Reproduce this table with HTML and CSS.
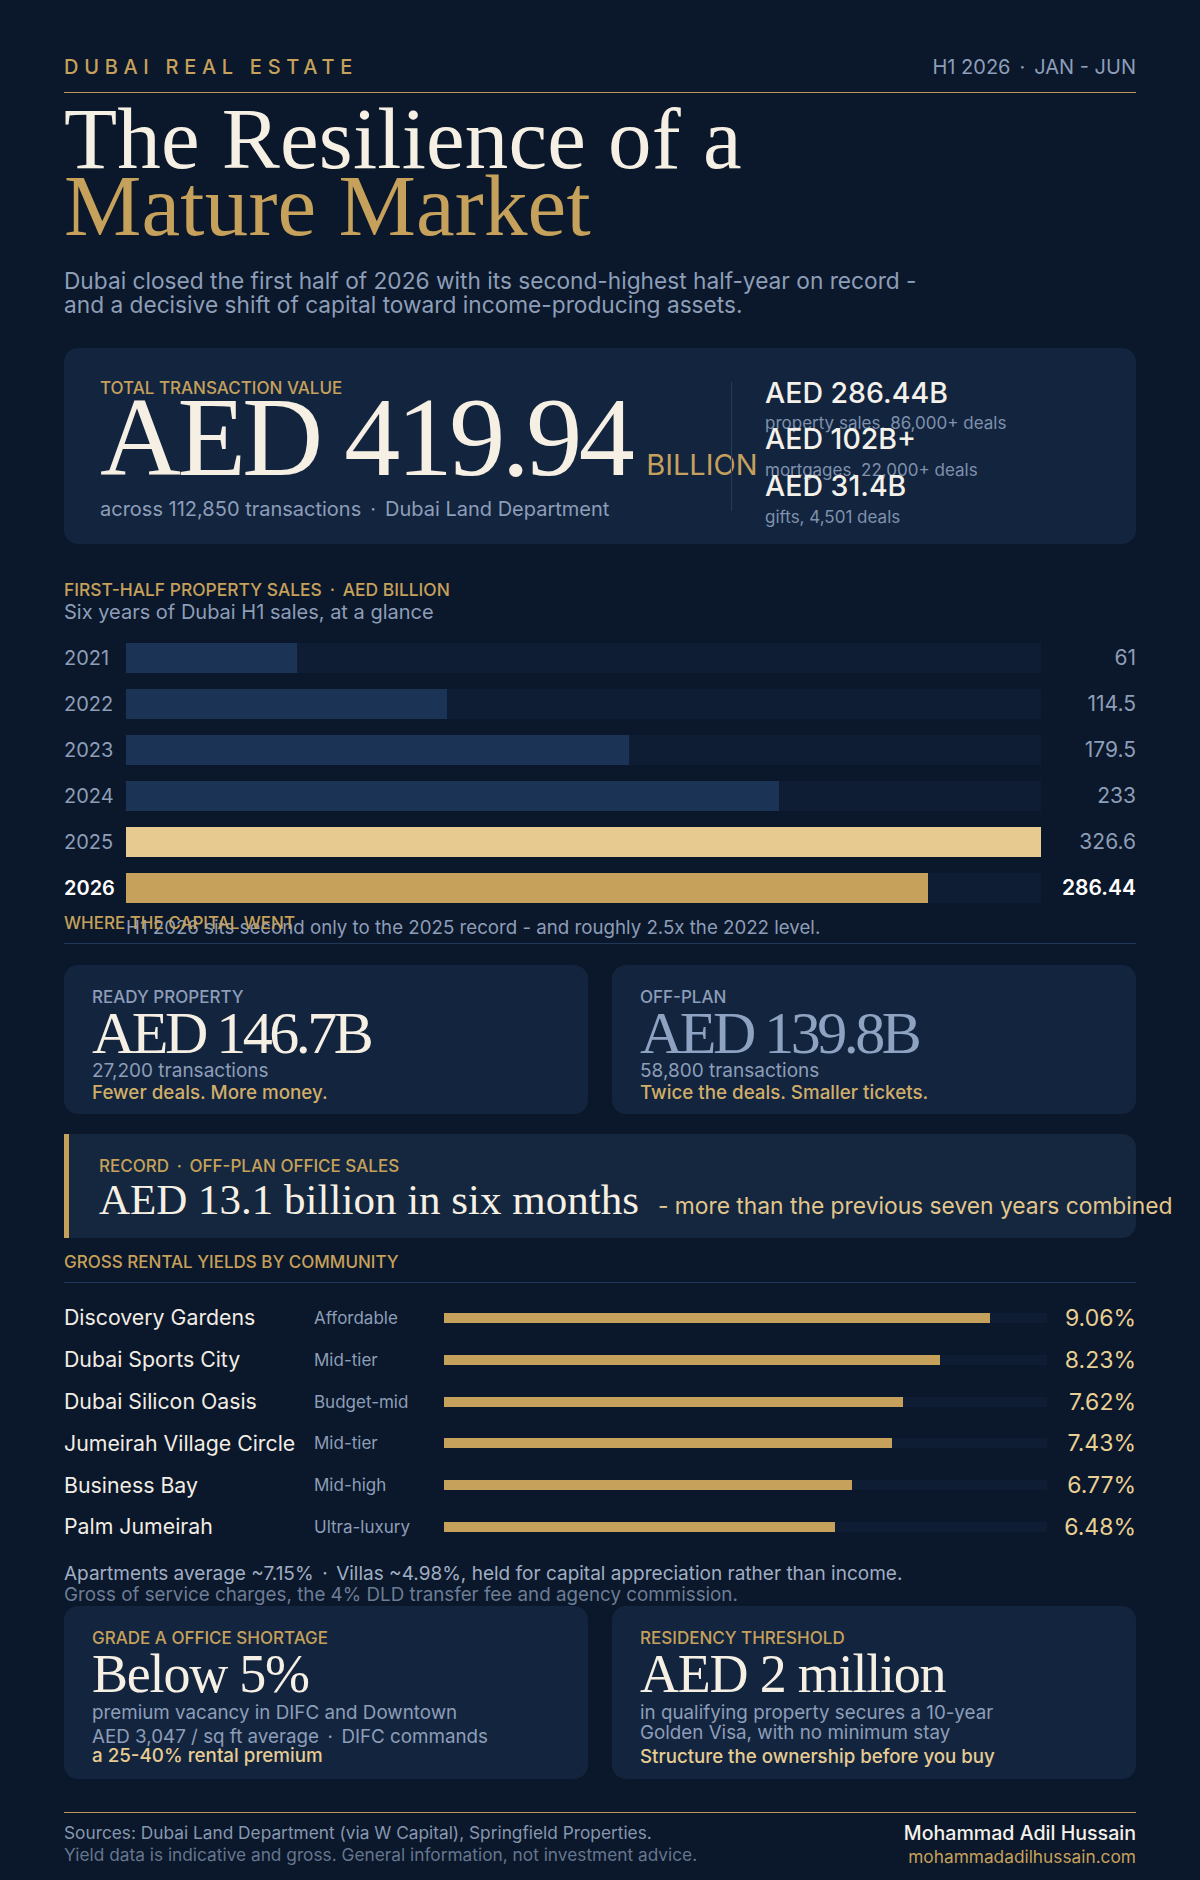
FILE: index.html
```html
<!DOCTYPE html>
<html lang="en">
<head>
<meta charset="utf-8">
<title>Dubai Real Estate H1 2026</title>
<link rel="stylesheet" href="styles.css">
</head>
<body>
<main class="page">
  <header class="top">
    <div class="kicker">DUBAI REAL ESTATE</div>
    <div class="period">H1 2026<span class="sep">·</span>JAN - JUN</div>
  </header>

  <h1 class="title">The Resilience of a<br><span class="gold">Mature Market</span></h1>
  <p class="lede">Dubai closed the first half of 2026 with its second-highest half-year on record -<br>and a decisive shift of capital toward income-producing assets.</p>

  <section class="card total">
    <div class="total-main">
      <div class="label">TOTAL TRANSACTION VALUE</div>
      <div class="figure"><span class="big">AED 419.94</span><span class="unit">BILLION</span></div>
      <div class="total-foot">across 112,850 transactions<span class="sep">·</span>Dubai Land Department</div>
    </div>
    <div class="vrule"></div>
    <div class="stats">
      <div class="stat"><div class="stat-v">AED 286.44B</div><div class="stat-l">property sales, 86,000+ deals</div></div>
      <div class="stat"><div class="stat-v">AED 102B+</div><div class="stat-l">mortgages, 22,000+ deals</div></div>
      <div class="stat"><div class="stat-v">AED 31.4B</div><div class="stat-l">gifts, 4,501 deals</div></div>
    </div>
  </section>

  <section class="sales">
    <div class="label chart-title">FIRST-HALF PROPERTY SALES<span class="sep">·</span>AED BILLION</div>
    <div class="sub">Six years of Dubai H1 sales, at a glance</div>
    <div class="bars">
      <div class="bar-row"><span class="yr">2021</span><div class="track"><div class="fill" style="width:18.68%"></div></div><span class="val">61</span></div>
      <div class="bar-row"><span class="yr">2022</span><div class="track"><div class="fill" style="width:35.06%"></div></div><span class="val">114.5</span></div>
      <div class="bar-row"><span class="yr">2023</span><div class="track"><div class="fill" style="width:54.96%"></div></div><span class="val">179.5</span></div>
      <div class="bar-row"><span class="yr">2024</span><div class="track"><div class="fill" style="width:71.34%"></div></div><span class="val">233</span></div>
      <div class="bar-row record-year"><span class="yr">2025</span><div class="track"><div class="fill" style="width:100%"></div></div><span class="val">326.6</span></div>
      <div class="bar-row current"><span class="yr">2026</span><div class="track"><div class="fill" style="width:87.70%"></div></div><span class="val">286.44</span></div>
    </div>
    <p class="chart-note">H1 2026 sits second only to the 2025 record - and roughly 2.5x the 2022 level.</p>
  </section>

  <div class="label section-head">WHERE THE CAPITAL WENT</div>

  <section class="split">
    <div class="card tile">
      <div class="tile-label">READY PROPERTY</div>
      <div class="tile-value">AED 146.7B</div>
      <div class="tile-sub">27,200 transactions</div>
      <div class="tile-em">Fewer deals. More money.</div>
    </div>
    <div class="card tile">
      <div class="tile-label">OFF-PLAN</div>
      <div class="tile-value dim">AED 139.8B</div>
      <div class="tile-sub">58,800 transactions</div>
      <div class="tile-em">Twice the deals. Smaller tickets.</div>
    </div>
  </section>

  <section class="record">
    <div class="label">RECORD<span class="sep">·</span>OFF-PLAN OFFICE SALES</div>
    <div class="record-line"><span class="record-big">AED 13.1 billion in six months</span><span class="record-tail">- more than the previous seven years combined</span></div>
  </section>

  <section class="yields">
    <div class="label yields-head">GROSS RENTAL YIELDS BY COMMUNITY</div>
    <div class="yrows">
      <div class="yrow"><span class="yname">Discovery Gardens</span><span class="ytier">Affordable</span><div class="ytrack"><div class="yfill" style="width:90.6%"></div></div><span class="yval">9.06%</span></div>
      <div class="yrow"><span class="yname">Dubai Sports City</span><span class="ytier">Mid-tier</span><div class="ytrack"><div class="yfill" style="width:82.3%"></div></div><span class="yval">8.23%</span></div>
      <div class="yrow"><span class="yname">Dubai Silicon Oasis</span><span class="ytier">Budget-mid</span><div class="ytrack"><div class="yfill" style="width:76.2%"></div></div><span class="yval">7.62%</span></div>
      <div class="yrow"><span class="yname">Jumeirah Village Circle</span><span class="ytier">Mid-tier</span><div class="ytrack"><div class="yfill" style="width:74.3%"></div></div><span class="yval">7.43%</span></div>
      <div class="yrow"><span class="yname">Business Bay</span><span class="ytier">Mid-high</span><div class="ytrack"><div class="yfill" style="width:67.7%"></div></div><span class="yval">6.77%</span></div>
      <div class="yrow"><span class="yname">Palm Jumeirah</span><span class="ytier">Ultra-luxury</span><div class="ytrack"><div class="yfill" style="width:64.8%"></div></div><span class="yval">6.48%</span></div>
    </div>
    <p class="ynote">Apartments average ~7.15%<span class="sep">·</span>Villas ~4.98%, held for capital appreciation rather than income.</p>
    <p class="ynote dim">Gross of service charges, the 4% DLD transfer fee and agency commission.</p>
  </section>

  <section class="duo">
    <div class="card tile tall">
      <div class="label">GRADE A OFFICE SHORTAGE</div>
      <div class="duo-value">Below 5%</div>
      <p class="duo-p">premium vacancy in DIFC and Downtown</p>
      <p class="duo-p second">AED 3,047 / sq ft average<span class="sep">·</span>DIFC commands<br><strong>a 25-40% rental premium</strong></p>
    </div>
    <div class="card tile tall">
      <div class="label">RESIDENCY THRESHOLD</div>
      <div class="duo-value">AED 2 million</div>
      <p class="duo-p">in qualifying property secures a 10-year<br>Golden Visa, with no minimum stay</p>
      <p class="duo-cta">Structure the ownership before you buy</p>
    </div>
  </section>

  <footer class="foot">
    <div class="foot-src">
      <div>Sources: Dubai Land Department (via W Capital), Springfield Properties.</div>
      <div class="dim">Yield data is indicative and gross. General information, not investment advice.</div>
    </div>
    <div class="foot-by">
      <div class="foot-name">Mohammad Adil Hussain</div>
      <div class="foot-url">mohammadadilhussain.com</div>
    </div>
  </footer>
</main>
</body>
</html>
```

FILE: styles.css
```css
* { box-sizing: border-box; }
html, body { margin: 0; padding: 0; }
body {
  background: #0b172a;
  font-family: Inter, "Noto Sans", sans-serif;
  color: #8d9eb8;
}
p { margin: 0; }
.page {
  width: 1200px;
  min-height: 1880px;
  padding: 54.5px 64px 0;
}
.sep { margin: 0 0.45em; }

/* header */
.top {
  display: flex;
  justify-content: space-between;
  align-items: baseline;
  padding-bottom: 13.5px;
  border-bottom: 1.5px solid #b9975a;
}
.kicker {
  font-size: 20px;
  line-height: 24px;
  letter-spacing: 5.7px;
  font-weight: 500;
  color: #c6a15b;
}
.period {
  font-size: 20px;
  line-height: 24px;
  color: #8d9eb8;
}
.title {
  margin: 11.5px 0 0;
  font-family: "Liberation Serif", serif;
  font-weight: 400;
  font-size: 87px;
  line-height: 67px;
  letter-spacing: 0.2px;
  color: #f6f0e4;
}
.title .gold { color: #c6a15b; }
.lede {
  margin-top: 30px;
  font-size: 22.7px;
  line-height: 24px;
  color: #8d9eb8;
}

/* generic */
.card {
  background: #13243f;
  border-radius: 14px;
}
.label {
  font-size: 17px;
  line-height: 20px;
  font-weight: 500;
  color: #c6a15b;
}

/* total card */
.total {
  margin-top: 31px;
  height: 196px;
  display: flex;
  align-items: flex-start;
  padding: 30px 36px 0;
}
.total-main {
  flex: none;
  width: 599px;
}
.figure {
  display: flex;
  align-items: baseline;
  white-space: nowrap;
}
.big {
  font-family: "Liberation Serif", serif;
  font-size: 112px;
  line-height: 78px;
  letter-spacing: -3.5px;
  color: #f6f0e4;
}
.unit {
  margin-left: 15px;
  font-size: 29px;
  line-height: 29px;
  color: #c6a15b;
}
.total-foot {
  margin-top: 18px;
  font-size: 20px;
  line-height: 24px;
  color: #8d9eb8;
}
.vrule {
  flex: none;
  width: 1px;
  height: 129px;
  margin: 4px 0 0 32px;
  background: #263b5b;
}
.stats {
  flex: 1;
  margin-top: 2px;
  padding-left: 33px;
  white-space: nowrap;
}
.stat { margin-bottom: -5.8px; }
.stat-v {
  font-size: 28.5px;
  line-height: 26px;
  font-weight: 500;
  color: #f4f1ea;
}
.stat-l {
  margin-top: 9.6px;
  font-size: 17px;
  line-height: 17px;
  color: #7f91ac;
}

/* sales chart */
.sales { margin-top: 36px; }
.chart-title { font-size: 17.4px; }
.sub {
  font-size: 20px;
  line-height: 24px;
  color: #8d9eb8;
}
.bars {
  margin-top: 19px;
  display: flex;
  flex-direction: column;
  gap: 16px;
}
.bar-row {
  display: grid;
  grid-template-columns: 62px 915px 1fr;
  height: 30px;
  align-items: center;
}
.yr {
  font-size: 20px;
  color: #8d9eb8;
}
.val {
  text-align: right;
  font-size: 21px;
  color: #8d9eb8;
}
.track {
  height: 30px;
  background: #0f1d34;
}
.fill {
  height: 100%;
  background: #1b3354;
}
.record-year .fill { background: #e6ca8f; }
.current .fill { background: #c6a15b; }
.current .yr, .current .val {
  color: #ffffff;
  font-weight: 600;
}
.chart-note {
  margin: 13.6px 0 0 62px;
  font-size: 18.7px;
  line-height: 23px;
  color: #8d9eb8;
}
.section-head {
  margin-top: -26px;
  padding-bottom: 10px;
  border-bottom: 1px solid #22385a;
}

/* ready / off-plan */
.split {
  display: grid;
  grid-template-columns: 1fr 1fr;
  gap: 24px;
  margin-top: 21px;
}
.tile {
  height: 149px;
  padding: 21.5px 28px 0;
}
.tile-label {
  font-size: 17px;
  line-height: 20px;
  font-weight: 500;
  color: #8d9eb8;
}
.tile-value {
  font-family: "Liberation Serif", serif;
  font-size: 60px;
  line-height: 52.4px;
  letter-spacing: -3.5px;
  color: #f6f0e4;
  white-space: nowrap;
}
.tile-value.dim { color: #8ea3c2; }
.tile-sub {
  margin-top: 1.2px;
  font-size: 19px;
  line-height: 22px;
  color: #8d9eb8;
}
.tile-em {
  font-size: 18.8px;
  line-height: 22px;
  font-weight: 500;
  color: #d1ae68;
}

/* record */
.record {
  margin-top: 20px;
  height: 104px;
  background: #14273f;
  border-left: 5px solid #c6a15b;
  border-radius: 0 14px 14px 0;
  padding: 22px 30px 0;
}
.record-line {
  display: flex;
  align-items: baseline;
  white-space: nowrap;
  margin-top: 0.8px;
}
.record-big {
  font-family: "Liberation Serif", serif;
  font-size: 43px;
  line-height: 46px;
  color: #f6f0e4;
}
.record-tail {
  margin-left: 19px;
  font-size: 22.8px;
  line-height: 26px;
  color: #e2c68c;
}

/* yields */
.yields { margin-top: 14px; }
.yields-head {
  padding-bottom: 10px;
  border-bottom: 1px solid #22385a;
}
.yrows { margin-top: 14px; }
.yrow {
  display: grid;
  grid-template-columns: 250px 130px 603px 1fr;
  height: 41.8px;
  align-items: center;
}
.yname {
  font-size: 21.3px;
  line-height: 25px;
  color: #f1ede4;
}
.ytier {
  font-size: 17px;
  color: #8d9eb8;
}
.ytrack {
  height: 10px;
  background: #0f1d34;
}
.yfill {
  height: 100%;
  background: #c6a15b;
}
.yval {
  text-align: right;
  font-size: 23px;
  line-height: 28px;
  color: #e8cf94;
}
.ynote {
  font-size: 19px;
  line-height: 21.6px;
  color: #a0aec3;
}
.yrows + .ynote { margin-top: 15px; }
.ynote.dim { font-size: 18.8px; color: #6c7d96; }

/* bottom tiles */
.duo {
  display: grid;
  grid-template-columns: 1fr 1fr;
  gap: 24px;
}
.tile.tall {
  height: 173.3px;
  padding-top: 21.6px;
}
.duo-value {
  font-family: "Liberation Serif", serif;
  font-size: 54px;
  line-height: 53px;
  letter-spacing: -1.2px;
  color: #f6f0e4;
  white-space: nowrap;
}
.duo-p {
  margin-top: 2.6px;
  font-size: 18.8px;
  line-height: 19.5px;
  color: #8d9eb8;
}
.duo-p.second { margin-top: 3.9px; }
.duo-p strong {
  font-weight: 500;
  color: #e6cc92;
}
.duo-cta {
  margin-top: 5px;
  font-size: 18.7px;
  line-height: 19.5px;
  font-weight: 500;
  color: #e6cc92;
}

/* footer */
.foot {
  margin-top: 32.3px;
  border-top: 1.5px solid #b9975a;
  padding-top: 9px;
  display: flex;
  justify-content: space-between;
}
.foot-src {
  font-size: 17.3px;
  line-height: 22.3px;
  color: #8797b0;
}
.foot-src .dim { color: #65768f; }
.foot-by { text-align: right; }
.foot-name {
  font-size: 19.6px;
  line-height: 22px;
  font-weight: 500;
  color: #f4f1ea;
}
.foot-url {
  font-size: 17.3px;
  line-height: 26px;
  color: #c6a15b;
}
```
